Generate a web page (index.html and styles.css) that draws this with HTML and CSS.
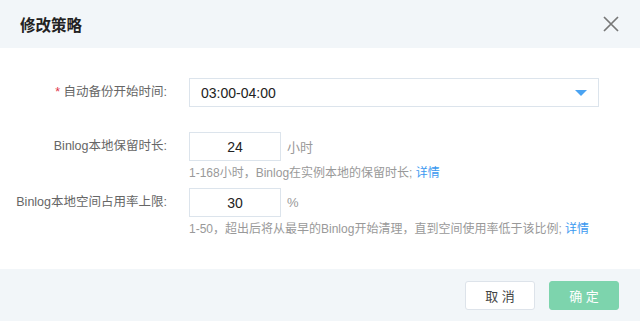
FILE: index.html
```html
<!DOCTYPE html>
<html lang="zh-CN">

<head>
    <meta charset="UTF-8">
    <meta name="viewport" content="width=device-width, initial-scale=1.0">
    <title>修改策略</title>
    <link rel="stylesheet" href="styles.css">
</head>

<body>
    <div class="dialog">
        <div class="dialog-header">
            <h2>修改策略</h2>
            <span class="close">
                <svg width="16" height="16" viewBox="0 0 16 16">
                    <path d="M1 1 L15 15 M15 1 L1 15" stroke="#777" stroke-width="1.7" fill="none" />
                </svg>
            </span>
        </div>
        <div class="dialog-body">
            <div class="form-row">
                <label class="form-label"><span class="required">*</span> 自动备份开始时间:</label>
                <div class="form-field">
                    <div class="select">
                        <span>03:00-04:00</span>
                        <span class="caret"></span>
                    </div>
                </div>
            </div>
            <div class="form-row">
                <label class="form-label">Binlog本地保留时长:</label>
                <div class="form-field">
                    <div class="inline">
                        <input class="num" type="text" value="24">
                        <span class="unit">小时</span>
                    </div>
                    <p class="hint">1-168小时，Binlog在实例本地的保留时长; <a href="#">详情</a></p>
                </div>
            </div>
            <div class="form-row">
                <label class="form-label">Binlog本地空间占用率上限:</label>
                <div class="form-field">
                    <div class="inline">
                        <input class="num" type="text" value="30">
                        <span class="unit">%</span>
                    </div>
                    <p class="hint">1-50，超出后将从最早的Binlog开始清理，直到空间使用率低于该比例; <a href="#">详情</a></p>
                </div>
            </div>
        </div>
        <div class="dialog-footer">
            <button class="btn btn-cancel">取 消</button>
            <button class="btn btn-ok">确 定</button>
        </div>
    </div>
</body>

</html>
```

FILE: styles.css
```css
* {
    margin: 0;
    padding: 0;
    box-sizing: border-box;
    font-family: 'Liberation Sans', 'Noto Sans CJK SC', sans-serif;
}

body {
    background: #fff;
}

.dialog {
    width: 640px;
    height: 321px;
    display: flex;
    flex-direction: column;
}

.dialog-header {
    height: 48px;
    background: #f2f6f9;
    display: flex;
    align-items: center;
    justify-content: space-between;
    padding: 0 21px 0 20px;
}

.dialog-header h2 {
    font-size: 15.5px;
    font-weight: 600;
    color: #222;
}

.close {
    display: flex;
}

.dialog-body {
    flex: 1;
    padding-top: 30px;
}

.form-row {
    display: flex;
    margin-bottom: 25px;
}

.form-row:nth-child(2) {
    margin-bottom: 7px;
}

.form-label {
    width: 171px;
    text-align: right;
    padding-right: 4px;
    font-size: 12.5px;
    color: #666;
    line-height: 29px;
}

.required {
    color: #e0344a;
}

.form-field {
    margin-left: 18px;
}

.select {
    width: 410px;
    height: 29px;
    border: 1px solid #dce4ec;
    display: flex;
    align-items: center;
    justify-content: space-between;
    padding: 0 11px 0 11px;
    font-size: 14px;
    color: #222;
}

.caret {
    width: 0;
    height: 0;
    border-left: 6px solid transparent;
    border-right: 6px solid transparent;
    border-top: 6px solid #4aa3f2;
}

.inline {
    display: flex;
    align-items: center;
}

.num {
    width: 92px;
    height: 29px;
    border: 1px solid #dce4ec;
    text-align: center;
    font-size: 14px;
    color: #222;
    outline: none;
}

.unit {
    margin-left: 6px;
    font-size: 13px;
    color: #999;
}

.hint {
    margin-top: 4px;
    font-size: 12px;
    color: #999;
    line-height: 16px;
}

.hint a {
    color: #3b99f0;
    text-decoration: none;
}

.dialog-footer {
    height: 52px;
    background: #f2f6f9;
    display: flex;
    justify-content: flex-end;
    align-items: flex-start;
    padding: 12px 21px 0 0;
    gap: 14px;
}

.btn {
    width: 70px;
    height: 29px;
    border-radius: 3px;
    font-size: 13px;
}

.btn-cancel {
    background: #fff;
    border: 1px solid #dde3ea;
    color: #444;
}

.btn-ok {
    background: #7dd4ad;
    border: 1px solid #7dd4ad;
    color: #fff;
}
```
